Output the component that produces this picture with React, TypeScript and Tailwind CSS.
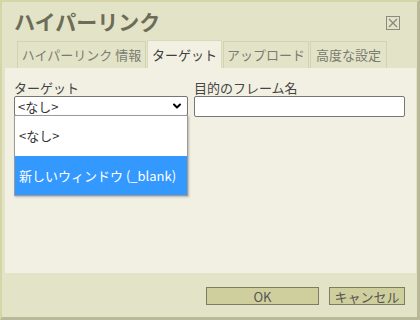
import { ChevronDown } from 'lucide-react';

const font = { fontFamily: '"Noto Sans CJK JP", "Noto Sans", sans-serif' };

export default function App() {
	return (
		<div
			className="flex h-[320px] w-[420px] flex-col border-t-2 border-l-2 border-[#d5d5a8] border-r-[3px] border-b-[3px] border-r-[#b9b99a] border-b-[#b9b99a] bg-[#e3e3c8] text-[13px] text-[#333]"
			style={font}
		>
			<header className="flex h-[38px] items-center justify-between pl-[12px] pr-[17px]">
				<h1 className="text-[21px] font-bold leading-none text-[#6d6d57]">ハイパーリンク</h1>
				<CloseIcon />
			</header>

			<nav className="flex h-[28px] items-end gap-[1px] pl-[15px]">
				<Tab label="ハイパーリンク 情報" width="w-[129px]" />
				<Tab label="ターゲット" width="w-[75px]" active />
				<Tab label="アップロード" width="w-[86px]" />
				<Tab label="高度な設定" width="w-[77px]" />
			</nav>

			<section className="ml-[3px] mr-[1px] flex h-[205px] gap-[6px] bg-[#f1f0e3] pl-[9px] pr-[11px] pt-[11px]">
				<div className="relative flex w-[174px] flex-col">
					<label className="h-[17px] leading-[17px] text-[#444]">ターゲット</label>
					<div className="flex h-[20px] items-center justify-between rounded-[2px] border border-[#767676] bg-white pl-[3px] pr-[4px] leading-none">
						<span>&lt;なし&gt;</span>
						<ChevronDown className="h-[12px] w-[12px] text-black" strokeWidth={4} />
					</div>
					<ul className="absolute top-[36px] left-0 z-10 w-[174px] border border-[#9a9a9a] bg-white shadow-[1px_1px_2px_rgba(0,0,0,0.25)]">
						<li className="flex h-[40px] items-center pl-[4px]">&lt;なし&gt;</li>
						<li className="flex h-[39px] items-center bg-[#3399ff] pl-[4px] text-white">新しいウィンドウ (_blank)</li>
					</ul>
				</div>
				<div className="flex flex-1 flex-col">
					<label className="h-[17px] leading-[17px] text-[#444]">目的のフレーム名</label>
					<div className="h-[21px] rounded-[2px] border border-[#767676] bg-white" />
				</div>
			</section>

			<footer className="flex flex-1 items-start justify-end gap-[10px] pr-[12px] pt-[14px]">
				<button className="h-[18px] w-[113px] border border-[#7d7d60] bg-[#cfcf9e] leading-none text-[#555]">OK</button>
				<button className="h-[18px] w-[76px] border border-[#7d7d60] bg-[#cfcf9e] leading-none text-[#555]">キャンセル</button>
			</footer>
		</div>
	);
}

function Tab({ label, width, active }: { label: string; width: string; active?: boolean }) {
	return (
		<div
			className={
				active
					? `flex h-[28px] ${width} items-center justify-center border border-b-0 border-[#d9d9bb] bg-[#f1f0e3] text-[#3f3f3f]`
					: `flex h-[27px] ${width} items-center justify-center border border-b-0 border-[#d3d3b3] bg-[#e3e3c8] text-[#7b7b70]`
			}
		>
			{label}
		</div>
	);
}

function CloseIcon() {
	return (
		<svg width="14" height="14" viewBox="0 0 14 14" className="mt-[4px]">
			<rect x="0.5" y="0.5" width="13" height="13" fill="none" stroke="#8a8a80" />
			<path d="M3 3 L11 11 M11 3 L3 11" stroke="#8a8a80" strokeWidth="1.4" />
		</svg>
	);
}
